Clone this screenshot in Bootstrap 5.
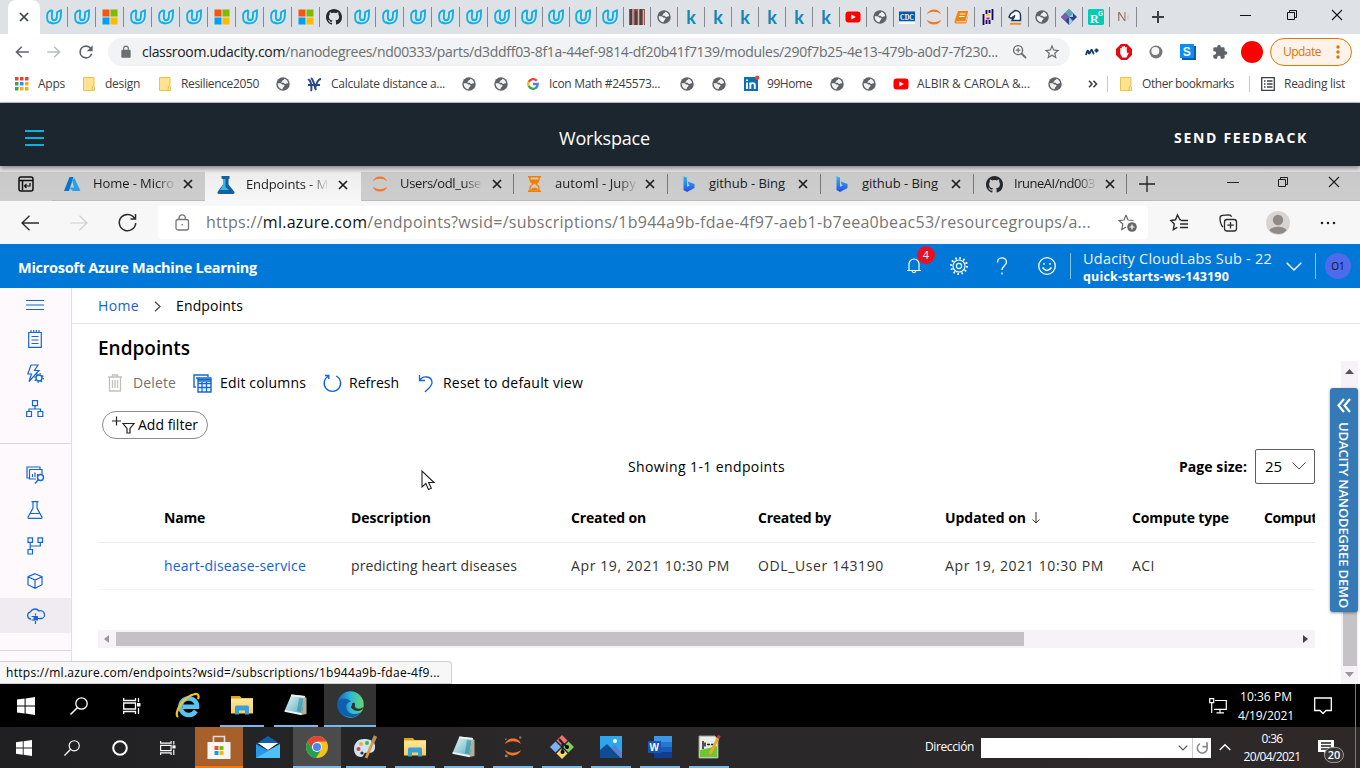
<!DOCTYPE html>
<html lang="en">
<head>
<meta charset="utf-8">
<title>Endpoints - Microsoft Azure Machine Learning</title>
<meta name="viewport" content="width=device-width, initial-scale=1">
<link rel="stylesheet" href="https://cdn.jsdelivr.net/npm/bootstrap@5.3.0/dist/css/bootstrap.min.css">
<style>
body{width:1360px;height:768px;overflow:hidden;font-family:"Open Sans","Noto Sans",sans-serif;font-size:12px;line-height:1.2;color:#000;background:#fff}
svg{display:block;flex:none;overflow:visible}
.bar{display:grid;align-items:center;white-space:nowrap}
.bar>*{justify-self:start}
.s10{width:10px;height:10px}.s12{width:12px;height:12px}.s14{width:14px;height:14px}.s16{width:16px;height:16px}.s18{width:18px;height:18px}.s20{width:20px;height:20px}.s24{width:24px;height:24px}
.ln{fill:none;stroke:currentColor}
/* outer browser */
.ctabs{height:34px;background:#dee1e6}
.ctab-on{width:32px;height:34px;margin-left:8px;background:#fff;border-radius:8px 8px 0 0}
.ctab{width:27px;height:20px;border-right:1px solid #85888c}
.ctab.wide{width:28px}
.kag{font:700 18px/18px Lato,sans-serif;color:#1287b5}
.nee{width:12px;overflow:hidden;color:#8a5d52;font-size:13px;-webkit-mask-image:linear-gradient(90deg,#000 60%,transparent)}
.cwin{grid-template-columns:90px 46px 45px 20px;color:#111;margin-left:13px}
.ctool{height:36px;grid-template-columns:32px 32px 31px 977px 31px 32px 32px 32px 29px 29px 82px;padding-left:13px;color:#5f6368}
.omni{width:962px;height:28px;border-radius:14px;background:#f1f3f4;grid-template-columns:24px 869px 32px 20px;padding-left:10px;font-size:14px;color:#6b6e72}
.omni b{font-weight:400;color:#202124}
.upd{width:82px;height:28px;border:1px solid #e37400;border-radius:14px;background:#fdf3ea;color:#d9730b;font-size:12px}
.cmark{height:33px;padding-bottom:4px;border-bottom:1px solid #c6c8cb;padding-left:15px;color:#3c4043;font-size:12px;
grid-template-columns:23px 45px 22px 54px 22px 95px 31px 24px 131px 32px 33px 22px 131px 32px 32px 23px 63px 32px 31px 24px 131px 40px 19px 13px 22px 107px 12px 23px 70px}
.cmark span{padding-top:1px}
.vsep{width:1px;height:16px;background:#c4c7cb}
/* classroom header */
.room{height:63px;background:#1c262f;color:#fff;grid-template-columns:534px 615px 140px;padding-left:25px;box-shadow:0 2px 5px rgba(0,0,0,.45);position:relative;z-index:2;padding-top:8px}
.room .ttl{font-size:18px}.room .fb{font-size:14px;font-weight:700}
/* inner browser */
.etabs{height:35px;background:linear-gradient(#e4e4e6 6px,#c9c9c9 6px,#cecece);font-size:13px;color:#1c1c1c;padding-top:6px}
.pgicon{width:52px;padding:4px 0 0 18px}
.etab{height:29px;grid-template-columns:29px 89px 12px;padding-left:12px;position:relative;padding-bottom:4px;border-bottom:1px solid #bcbcbc}
.e153{width:153px}.e154{width:154px}.e156{width:156px}
.etab.esep::after{content:"";position:absolute;right:0;top:2px;height:20px;width:1px;background:#777}
.etab.on{background:linear-gradient(#ececec,#f7f7f7);border-bottom:0}
.etab.wide90{grid-template-columns:29px 90px 12px}
.fade-r{-webkit-mask-image:linear-gradient(90deg,#000 76%,transparent 100%);width:83px;overflow:hidden}
.ewin{grid-template-columns:88px 50px 51px 14px;padding:0 0 5px 12px;border-bottom:1px solid #bcbcbc;flex:1}
.etool{height:43px;background:#f7f7f7;grid-template-columns:49px 48px 39px 1012px 49px 48px 53px 20px;padding-left:22px;color:#2b2b2b}
.ebox{width:990px;height:33px;background:#fff;border-radius:4px;grid-template-columns:31px 912px 20px;padding-left:17px;font-size:16px;color:#767676}
.ebox b{font-weight:400;color:#111}
.azh{height:44px;background:#0078d7;color:#fff;grid-template-columns:888px 44px 44px 44px 33px 13px 202px 30px 9px 26px;padding-left:18px}
.azh .ttl{font-weight:700;font-size:14.5px;padding-top:3px}
.dot4{width:18px;height:18px;background:#e81123;left:11px;top:-11px;font-size:11px}
.who{width:26px;height:26px;background:#4f6bed;color:#111;font-size:10px}
.subs{margin-left:-1px;padding-top:4px}
.sub1{font-size:14.5px;line-height:18px;color:#e9f3fc}.sub2{font-size:12.5px;font-weight:700;line-height:18px}
.azsep{width:1px;height:26px;background:#8cc0ed}
/* workspace */
.ws{height:396px;position:relative}
.side{width:72px;background:#fdf9fd;border-right:1px solid #e3dee4;color:#1565d8}
.side div{height:35px;display:flex;align-items:center;justify-content:center;padding-right:1px;width:71px}
.side .h34{height:34px}.side .h36{height:36px}
.side hr{margin:17px 0 13px;border-top:1px solid #ddd8de;opacity:1;height:0}
.side .sel{background:#efebf0}
.crumb{height:36px;border-bottom:1px solid #e5e3e5;font-size:14px;grid-template-columns:56px 22px 80px;padding:2px 0 0 26px}
.pg{padding-left:26px;font-size:14px}
.lk{color:#1062d6}
.h20{font-size:19px;font-weight:600;height:48px}
.cmds{height:22px;grid-template-columns:26px 60px 27px 103px 26px 69px 25px 149px;padding-left:9px}
.addf{width:106px;height:28px;border:1px solid #8c8c8c;border-radius:14px;margin:17px 0 0 4px;padding-left:9px;grid-template-columns:26px 70px}
.addf span{padding-top:1px}
.show{height:36px;margin-top:9px;grid-template-columns:530px 551px 76px 60px;width:1217px}
.show>span,.show>b{padding-top:3px}
.show b,.thd{font-weight:700}
.pgs{width:60px;height:35px;border:1px solid #605e5c;border-radius:2px;padding:0 8px 0 9px;font-size:15px}
.tr7{width:1217px;overflow:hidden;grid-template-columns:187px 220px 187px 187px 187px 132px 60px;padding-left:66px;color:#333}
.thd{height:59px;color:#000;border-bottom:1px solid #eceaec;padding-top:11px}
.thd .cut{width:51px;overflow:hidden}
.tbd{height:47px;border-bottom:1px solid #f6f5f6;padding-top:1px}
.hsc{width:1217px;height:18px;background:#f6f2f7;margin-top:40px;padding-left:5px;grid-template-columns:13px 1187px 10px;color:#9a979b}
.hth{width:908px;height:14px;background:#c3c1c4}
.vsc{right:2px;top:73px;width:17px;height:323px;background:#f6f2f7}
.vth{width:14px;height:208px;background:#c5c3c6;margin-top:84px}
.rib{right:2px;top:100px;width:28px;height:224px;background:#337ab7;border-radius:3px;color:#fff;box-shadow:0 1px 3px rgba(0,0,0,.4)}
.rib span{writing-mode:vertical-rl;font-size:13px;font-weight:600;line-height:16px}
.stat{left:0;bottom:0;width:452px;height:23px;background:#f7f7f7;border:1px solid #cfcfcf;border-left:0;border-radius:0 4px 0 0;padding:2px 6px;font-size:12px;line-height:17px}
.cur{left:421px;top:182px}
/* taskbars */
.tb1,.tb2{grid-template-rows:100%}
.tb1{height:43px;background:#000;color:#fff;grid-template-columns:53px 53px 44px 54px 54px 50px 884px 33px 72px 41px 1px;padding-left:17px}
.tb2{height:41px;background:linear-gradient(90deg,#202022,#2a2829 40%,#2e2829);color:#fff;grid-template-columns:48px 48px 48px 35px 49px 49px 53px repeat(8,49px) 243px 238px 24px 75px 37px 1px;padding-left:16px}
.cell{width:40px;height:100%;display:flex;align-items:center;justify-content:center;border-bottom:2px solid #76b9ed}
.w44{width:44px}.w48{width:48px}.w52{width:52px}
.tb2 .cell.nob{border-color:transparent}
.dir{justify-self:end!important;margin-right:7px}
.adr{width:230px;height:20px;background:#fff;color:#555;padding-right:2px}
.adr i{width:1px;height:20px;background:#ccc;margin:0 3px 0 4px}
.clk{line-height:19px;text-align:center;font-size:12px}
.tb2 .clk{line-height:18px;width:58px;padding-top:1px}
.edgeln{width:1px;height:100%;background:#777}
.nb20{left:6px;top:8px;width:20px;height:16px;border:1px solid #999;border-radius:8px;background:#3a3638;font-size:11px;font-weight:600}
</style>
</head>
<body class="d-flex flex-column">
<svg width="0" height="0" class="position-absolute" aria-hidden="true"><defs>
<linearGradient id="gEdge" x1="0" y1="0" x2="1" y2="0"><stop offset="0" stop-color="#0f63b8"/><stop offset=".5" stop-color="#2eb5d8"/><stop offset="1" stop-color="#63dc6b"/></linearGradient>
<linearGradient id="gNote" x1="0" y1="0" x2="1" y2="1"><stop offset="0" stop-color="#f0f8f8"/><stop offset="1" stop-color="#48a9bb"/></linearGradient>
<linearGradient id="gFold" x1="0" y1="0" x2="0" y2="1"><stop offset="0" stop-color="#ffe9a0"/><stop offset="1" stop-color="#f9cf52"/></linearGradient>
<linearGradient id="gBing" x1="0" y1="0" x2="0" y2="1"><stop offset="0" stop-color="#2fb6f3"/><stop offset="1" stop-color="#2150e6"/></linearGradient>
<symbol id="uda" viewBox="0 0 16 16"><path d="M6.300 1.300C3.500 1.800 1.300 3 1.200 6v3.500c0 3 2.300 5 5.300 4.800M6.300 1.300 5.800 8c0 2 .8 3.200 2.200 3.200s2.700-1.200 2.800-3L11.200 3l4-1.800-.5 7c-.3 3.500-3.200 6-6.700 6.200-2 0-3.400-.6-4.300-1.400" fill="none" stroke="#12b0e0" stroke-width="1.900" stroke-linejoin="round"/></symbol>
<symbol id="ms" viewBox="0 0 16 16"><path fill="#f65314" d="M.5.500h7v7h-7z"/><path fill="#7cbb00" d="M8.500.500h7v7h-7z"/><path fill="#00a1f1" d="M.5 8.500h7v7h-7z"/><path fill="#ffbb00" d="M8.500 8.500h7v7h-7z"/></symbol>
<symbol id="gh" viewBox="0 0 16 16"><path fill="#24292e" d="M8 0C3.580 0 0 3.580 0 8c0 3.540 2.290 6.530 5.470 7.590.400.070.550-.170.550-.380 0-.190-.010-.820-.010-1.490-2.010.370-2.530-.490-2.690-.940-.090-.230-.480-.940-.820-1.130-.280-.150-.680-.520-.010-.530.630-.010 1.080.580 1.230.820.720 1.210 1.870.870 2.330.660.070-.520.280-.870.510-1.070-1.780-.200-3.640-.890-3.640-3.950 0-.870.310-1.590.820-2.150-.080-.200-.360-1.020.080-2.120 0 0 .670-.210 2.200.820.640-.180 1.320-.270 2-.270s1.360.090 2 .270c1.530-1.040 2.200-.820 2.200-.820.440 1.100.160 1.920.080 2.120.510.560.820 1.270.820 2.150 0 3.070-1.870 3.750-3.650 3.950.290.250.540.730.540 1.480 0 1.070-.010 1.930-.010 2.200 0 .210.150.460.550.380A8.010 8.010 0 0 0 16 8c0-4.420-3.580-8-8-8z"/></symbol>
<symbol id="globe" viewBox="0 0 16 16"><circle cx="8" cy="8" r="7.700" fill="#5f6368"/><path fill="#f1f2f4" d="M1.900 7.200 5 7c1.600 0 1.300 1.500 3 1.700 1.600.1 2 .8 1.500 1.800-.6 1.100-1.700 1.100-2 3.600C4.400 13.900 1.900 11.300 1.900 7.200zM9.300 2.100c.4 1.100-.4 1.500-1.700 1.800-.8.300-.4 1.300-1.500 1.700-.3 1 1.300.9 2.400.9 1.200.1 1 1.500 2.300 1.600 1.300 0 1.400-1 3.200-.8-.2-2.500-2-4.600-4.700-5.200z"/></symbol>
<symbol id="books" viewBox="0 0 16 16"><path fill="#8a5550" d="M0 0h16v16H0z"/><path d="M2 0v16M7 2v14M12 0v16" stroke="#2f3550" stroke-width="1.400"/><path d="M4 0v16M9.500 0v16M14.500 1v15" stroke="#d3b497" stroke-width="1.200"/></symbol>
<symbol id="yt" viewBox="0 0 16 16"><rect x=".5" y="2.500" width="15" height="11" rx="3" fill="#f00"/><path fill="#fff" d="m6.300 5.500 4.500 2.500-4.500 2.500z"/></symbol>
<symbol id="cdc" viewBox="0 0 16 16"><path fill="#0b57a4" d="M0 2.500h16v10H0z"/><path fill="#fff" d="M0 12.500h16V15H0z"/><text x="8" y="10.800" text-anchor="middle" textLength="14" lengthAdjust="spacingAndGlyphs" font-family="Liberation Serif,serif" font-weight="700" font-size="8.500" fill="#fff">CDC</text></symbol>
<symbol id="jup" viewBox="0 0 16 16"><path fill="#f37726" d="M.8 5.300C3-1.200 13-1.200 15.200 5.300 11 2 5 2 .8 5.300zM.8 10.700C3 17.200 13 17.200 15.200 10.700c-4.200 3.300-10.200 3.300-14.400 0z"/></symbol>
<symbol id="obook" viewBox="0 0 16 16"><path fill="#f5820b" d="M5 2h9.500q.8.200.5 1L12.500 11.500q-.4.800-1 .8H3.500q-1 .5 0 1h9L15.500 5l-2 8.500q-.3 1-1 1H3q-1.800-.5-1.500-2z"/><path d="M6.800 5h5.500M6 7.500h5.500" stroke="#fff"/></symbol>
<symbol id="pandas" viewBox="0 0 16 16"><path d="M3.500 5v11M12.500 0v11M6.500 1v4m0 6v4M9.500 1v3m0 7v4" stroke="#150458" stroke-width="1.800"/><path d="M8 5v2" stroke="#ffca00" stroke-width="3"/><path d="M8 8.500v2" stroke="#e70488" stroke-width="3"/></symbol>
<symbol id="knight" viewBox="0 0 16 16"><path d="M5 11.500h8.500V6.500C13.500 3.500 11 1.500 8 1.500L3.500 5 2 8l2 1.300 3.500-2.300c0 2-2 2.500-2.500 4.500z" fill="#fff" stroke="#1c3d63" stroke-width="1.500"/><path d="M3 14.800h11" stroke="#f08a1d" stroke-width="1.800"/></symbol>
<symbol id="hexi" viewBox="0 0 16 16"><path fill="#33408b" d="M8 0l8 8-8 8-8-8z"/><path fill="#5ba7b5" d="M8 0l4 4-4 4-4-4z"/><path fill="#7b5ea8" d="M4 4l4 4-4 4-4-4z"/><path fill="#9bd0d6" d="M8 8l4-4v4zM8 8l4 4-4 4z"/></symbol>
<symbol id="rg" viewBox="0 0 16 16"><rect width="16" height="16" rx="1.500" fill="#00ccb1"/><text x="2" y="13.500" font-family="Liberation Serif,serif" font-weight="700" font-size="12" fill="#fff">R</text><text x="10" y="6.500" font-family="Liberation Sans,sans-serif" font-weight="700" font-size="6.500" fill="#fff">G</text></symbol>
<symbol id="back" viewBox="0 0 24 24"><path fill="currentColor" d="M21 11H7.100l5.300-5.300L11 4.200 3.100 12l7.900 7.800 1.400-1.500L7.100 13H21z"/></symbol>
<symbol id="reload" viewBox="0 0 24 24"><path fill="currentColor" d="M17.650 6.350A7.960 7.960 0 0 0 12 4a8 8 0 1 0 7.730 10h-2.080A6 6 0 1 1 12 6c1.660 0 3.140.690 4.220 1.780L13 11h7V4z"/></symbol>
<symbol id="lock" viewBox="0 0 24 24"><path fill="currentColor" fill-rule="evenodd" d="M18 8h-1V6A5 5 0 0 0 7 6v2H6a2 2 0 0 0-2 2v10c0 1.100.9 2 2 2h12a2 2 0 0 0 2-2V10a2 2 0 0 0-2-2zM9 6a3 3 0 0 1 6 0v2H9z"/></symbol>
<symbol id="star" viewBox="0 0 24 24"><path fill="currentColor" fill-rule="evenodd" d="M22 9.240l-7.190-.620L12 2 9.190 8.630 2 9.240l5.460 4.730L5.820 21 12 17.270 18.180 21l-1.630-7.030zM12 15.400l-3.760 2.270 1-4.280-3.320-2.880 4.380-.380L12 6.100l1.710 4.040 4.380.380-3.320 2.880 1 4.280z"/></symbol>
<symbol id="zoomin" viewBox="0 0 24 24"><circle cx="9.500" cy="9.500" r="6" fill="none" stroke="currentColor" stroke-width="1.900"/><path d="M14 14l6 6" stroke="currentColor" stroke-width="2.400"/><path d="M6.500 9.500h6M9.500 6.500v6" stroke="currentColor" stroke-width="1.600"/></symbol>
<symbol id="puz" viewBox="0 0 24 24"><path fill="currentColor" d="M20.500 11H19V7a2 2 0 0 0-2-2h-4V3.500a2.500 2.500 0 0 0-5 0V5H4a2 2 0 0 0-2 2v3.800h1.500a2.700 2.700 0 0 1 0 5.400H2V20c0 1.100.9 2 2 2h3.800v-1.500a2.700 2.700 0 0 1 5.400 0V22H17a2 2 0 0 0 2-2v-4h1.500a2.500 2.500 0 0 0 0-5z"/></symbol>
<symbol id="xx" viewBox="0 0 10 10"><path d="M1 1l8 8M9 1 1 9" stroke="currentColor" stroke-width="1.700"/></symbol>
<symbol id="xthin" viewBox="0 0 12 12"><path d="M1 1l10 10M11 1 1 11" stroke="currentColor" stroke-width="1.100"/></symbol>
<symbol id="rest" viewBox="0 0 12 12"><path d="M1.500 3.500h7v7h-7zM3.500 3.500v-2h7v7h-2" fill="none" stroke="currentColor"/></symbol>
<symbol id="fld" viewBox="0 0 12 14"><path d="M.5.500h10.500v8.500h-1.200v4.500H.5z" fill="#ffe391" stroke="#e8c34a"/><path d="M9.200 13.500V10q1.200-1.200 2.300 0v3.500z" fill="#ffe391" stroke="#e8c34a"/></symbol>
<symbol id="win" viewBox="0 0 18 18"><path fill="#fff" d="M0 2.600 7.600 1.500v7H0zM8.600 1.400 18 0v8.500H8.600zM0 9.500h7.600v7L0 15.400zM8.600 9.500H18V18l-9.400-1.400z"/></symbol>
<symbol id="find" viewBox="0 0 18 18"><circle cx="11.500" cy="6.500" r="5.700" fill="none" stroke="#fff" stroke-width="1.300"/><path d="M7.500 10.500.5 17.500" stroke="#fff" stroke-width="1.500"/></symbol>
<symbol id="tv" viewBox="0 0 18 18"><path d="M.7 1v2.500h11.800V1M.7 17v-2.500h11.800V17M.7 6h11.800v6H.7zM15.500 1v4M15.500 11v6" fill="none" stroke="#fff" stroke-width="1.300"/><path fill="#fff" d="M14 6h3.500v3.500H14z"/></symbol>
<symbol id="fold2" viewBox="0 0 24 24"><path fill="#e0a312" d="M1 3h9l1.500 2H23v3H1z"/><path fill="url(#gFold)" d="M1 5.500h22v15H1z"/><path fill="#3aa0dc" d="M5 21.500v-7.500q0-1.500 1.500-1.500h11q1.500 0 1.500 1.500v7.500h-4v-4H9v4z"/></symbol>
<symbol id="note" viewBox="0 0 24 24"><path fill="#b9ac95" d="M20 3.500 22.500 5v16l-5 1z"/><path fill="url(#gNote)" d="M7.500 1.500 21 3l-3.500 18.500L.5 18z"/><path fill="#eef3f2" d="M7.500 1.500 21 3l-.3 1.800L6.800 3.200zM1 17l17 3.200-.4 2L.3 18.800z"/><path fill="#2d8699" opacity=".55" d="M15 5l4.500.6L16.800 19l-4-.8z"/></symbol>
<symbol id="bing" viewBox="0 0 12 16"><path fill="url(#gBing)" d="M.5.300 4 1.600v9.200l3-1.600-1.400-.8L4.700 5.500 11.500 8v4L4 16 .5 14z"/></symbol>
</defs></svg>

<!-- outer browser: tab strip -->
<div class="ctabs d-flex align-items-center">
 <div class="ctab-on d-flex align-items-center justify-content-center"><svg class="s10" style="color:#3c4043"><use href="#xx"/></svg></div>
 <div id="tabs" class="d-flex"></div>
 <div class="cwin bar">
  <svg class="s16" viewBox="0 0 16 16"><path d="M2 8h12M8 2v12" stroke="#3c4043" stroke-width="2"/></svg>
  <svg width="12" height="12"><path d="M0 4.500h11" stroke="#111"/></svg>
  <svg class="s12" style="margin-top:-5px"><use href="#rest"/></svg>
  <svg class="s12" style="margin-top:-5px"><use href="#xthin"/></svg>
 </div>
</div>
<!-- outer browser: toolbar -->
<div class="ctool bar">
 <svg class="s18"><use href="#back"/></svg>
 <svg class="s18" style="color:#babcbe;transform:scaleX(-1)"><use href="#back"/></svg>
 <svg class="s20" style="margin-left:-1px"><use href="#reload"/></svg>
 <div class="omni bar"><svg class="s14" style="margin-left:1px"><use href="#lock"/></svg><span data-w="856"><b>classroom.udacity.com</b>/nanodegrees/nd00333/parts/d3ddff03-8f1a-44ef-9814-df20b41f7139/modules/290f7b25-4e13-479b-a0d7-7f230...</span><svg class="s18"><use href="#zoomin"/></svg><svg class="s18"><use href="#star"/></svg></div>
 <svg width="14" height="10" viewBox="0 0 14 10"><path d="M1 8c1-4 2-6 2.500-3S5 6 6 3.500 7.500 6 9 7M9.500 3.500h4M11.500 1.500v4" fill="none" stroke="#123a69" stroke-width="1.800"/></svg>
 <svg class="s16" viewBox="0 0 16 16"><path fill="#e20b14" d="M5 0h6l5 5v6l-5 5H5l-5-5V5z"/><path fill="#fff" d="M4.300 7V4h1.200v3l.4-4.500h1.400V7l.3-5h1.400v5l.4-4h1.300l.2 6.500 1-1 .8.600L10.500 13.500H6.300L4.300 10z"/></svg>
 <svg class="s16" viewBox="0 0 16 16"><circle cx="8" cy="8" r="6.500" fill="#777"/><circle cx="7.300" cy="7" r="4" fill="#f6f6f6"/></svg>
 <svg class="s16" viewBox="0 0 16 16"><path fill="#0b5ca8" d="M2 2h14v14H2z"/><path fill="#0a8df5" d="M0 0h14v14H0z"/><text x="2.700" y="11.500" font-size="12" font-weight="700" font-family="Liberation Sans,sans-serif" fill="#fff">S</text></svg>
 <svg class="s16"><use href="#puz"/></svg>
 <svg width="22" height="22"><circle cx="11" cy="11" r="11" fill="#f00"/></svg>
 <div class="upd d-flex align-items-center justify-content-between ps-2"><span class="ms-1" data-w="38">Update</span><svg width="4" height="14" style="margin-right:11px"><path d="M2 2v.01M2 7v.01M2 12v.01" stroke="#d9730b" stroke-width="3.400" stroke-linecap="round"/></svg></div>
</div>
<!-- outer browser: bookmarks -->
<div class="cmark bar">
 <svg width="14" height="14"><path fill="#ea4335" d="M0 0h3.500v3.500H0zM5 0h3.500v3.500H5zM10 0h3.500v3.500H10z"/><path fill="#34a853" d="M0 5h3.500v3.500H0zM0 10h3.500v3.500H0z"/><path fill="#4285f4" d="M5 5h3.500v3.500H5z"/><path fill="#f6ae16" d="M10 5h3.500v3.500H10zM5 10h3.500v3.500H5zM10 10h3.500v3.500H10z"/></svg><span data-w="27">Apps</span>
 <svg width="12" height="14"><use href="#fld"/></svg><span data-w="35">design</span>
 <svg width="12" height="14"><use href="#fld"/></svg><span data-w="78">Resilience2050</span>
 <svg class="s14"><use href="#globe"/></svg>
 <svg width="15" height="15" viewBox="0 0 15 15"><path d="M1 3c3-2 4 9 3 11M4 1c3 2 3 8 5 12M8 12C9 8 10 2 14 2M1 8h12" fill="none" stroke="#234a86" stroke-width="2"/></svg><span data-w="114">Calculate distance a...</span>
 <svg class="s14"><use href="#globe"/></svg><svg class="s14"><use href="#globe"/></svg>
 <svg width="12" height="12" viewBox="0 0 24 24" fill="none" stroke-width="4.600"><path stroke="#ea4335" d="M19.500 5.500A9.600 9.600 0 0 0 3.500 8"/><path stroke="#fbbc05" d="M3.500 7.500a9.600 9.600 0 0 0 0 9"/><path stroke="#34a853" d="M3.500 16A9.600 9.600 0 0 0 18.500 19.200"/><path stroke="#4285f4" d="M18 19.500c2.500-2 3.500-4.500 3.500-7.500H12"/></svg><span data-w="111">Icon Math #245573...</span>
 <svg class="s14"><use href="#globe"/></svg><svg class="s14"><use href="#globe"/></svg>
 <svg class="s14" viewBox="0 0 14 14"><path fill="#0a71b0" d="M0 0h14v14H0z"/><path d="M3 5.500V12M6.300 5.500V12M6.300 8c1-2.500 4.500-2.500 4.500 0v4M3 2.500v1.600" stroke="#fff" stroke-width="1.900" fill="none"/><circle cx="13.200" cy=".8" r="2.200" fill="#ee4035"/></svg><span data-w="45">99Home</span>
 <svg class="s14"><use href="#globe"/></svg><svg class="s14"><use href="#globe"/></svg>
 <svg class="s16"><use href="#yt"/></svg><span data-w="113">ALBIR &amp; CAROLA &amp;...</span>
 <svg class="s14"><use href="#globe"/></svg>
 <svg width="10" height="8"><path d="M1 .8 4 4 1 7.200M5.500.8l3 3.200-3 3.200" class="ln" stroke-width="1.600"/></svg>
 <i class="vsep"></i>
 <svg width="12" height="14"><use href="#fld"/></svg><span data-w="92">Other bookmarks</span>
 <i class="vsep"></i>
 <svg width="14" height="14" class="ln"><path d="M.7.7h12.600v12.600H.7zM3 4h1.500M3 7h1.500M3 10h1.500M6 4h5.500M6 7h5.500M6 10h5.500" stroke-width="1.300"/></svg><span data-w="61">Reading list</span>
</div>

<!-- classroom header -->
<div class="room bar">
 <svg width="20" height="16" style="margin-top:-1px"><path d="M0 1h19M0 8h19M0 15h19" stroke="#02b3e4" stroke-width="2"/></svg>
 <span class="ttl" data-w="91">Workspace</span>
 <span class="fb" data-w="134">SEND FEEDBACK</span>
</div>

<!-- inner browser: tabs -->
<div class="etabs d-flex">
 <div class="pgicon"><svg width="16" height="16" viewBox="0 0 16 16"><path d="M1 4.500V13q0 2 2 2h10q2 0 2-2V3q0-2-2-2H3Q1 1 1 3v1.500h14M4.500 5v9" fill="none" stroke="#111" stroke-width="1.500"/><path d="M8.500 12 6.500 10l2-2M7 10h5V7" fill="none" stroke="#111" stroke-width="1.200"/></svg></div>
 <div class="etab wide90 e153 bar"><svg width="17" height="15" viewBox="0 0 17 15"><path fill="#0a74c9" d="M5.500 0h4L5 14H0z"/><path fill="#2aa0ea" d="M8 3l2.500-2L16.500 14H9l-4-3.500h5z"/></svg><span class="fade-r"><span data-w="81">Home - Micro</span></span><svg class="s10"><use href="#xx"/></svg></div>
 <div class="etab on e156 bar"><svg width="18" height="18" viewBox="0 0 18 18"><path fill="#12609f" d="M4.500 0h8v2.500l-1 .8v5.200l6 7.500q.3 2-1.500 2h-14q-2 0-1.500-2L6 8.500V3.300l-1.500-.8z"/><path fill="#35b6e8" d="M6 3h2.500v8l3.500 3h-9L6 9z"/></svg><span class="fade-r"><span data-w="82">Endpoints - M</span></span><svg class="s10" style="margin-left:3px"><use href="#xx"/></svg></div>
 <div class="etab wide90 e153 bar esep"><svg class="s16" style="margin-left:-1px"><use href="#jup"/></svg><span class="fade-r" style="margin-left:-2px"><span data-w="81">Users/odl_use</span></span><svg class="s10"><use href="#xx"/></svg></div>
 <div class="etab wide90 e154 bar esep"><svg width="15" height="16" viewBox="0 0 15 16" style="margin-left:1px"><path d="M1 .8h13M1 15.200h13" stroke="#f57c00" stroke-width="1.600"/><path d="M3 1v3q0 2 3 4-3 2-3 4v3M12 1v3q0 2-3 4 3 2 3 4v3" fill="none" stroke="#f57c00" stroke-width="1.300"/><path fill="#f57c00" d="M3 3.500h9Q11 7 7.500 8 4 7 3 3.500zM3 14.500q4.500-6 9 0z"/></svg><span class="fade-r"><span data-w="81">automl - Jupy</span></span><svg class="s10"><use href="#xx"/></svg></div>
 <div class="etab e153 bar esep"><svg width="12" height="16" style="margin-left:3px"><use href="#bing"/></svg><span data-w="76">github - Bing</span><svg class="s10"><use href="#xx"/></svg></div>
 <div class="etab e153 bar esep"><svg width="12" height="16" style="margin-left:3px"><use href="#bing"/></svg><span data-w="76">github - Bing</span><svg class="s10"><use href="#xx"/></svg></div>
 <div class="etab wide90 e153 bar esep"><svg width="17" height="17"><use href="#gh"/></svg><span class="fade-r" style="margin-left:-1px"><span data-w="81">IruneAI/nd003</span></span><svg class="s10"><use href="#xx"/></svg></div>
 <div class="ewin bar"><svg width="16" height="16"><path d="M0 8h16M8 0v16" stroke="#222" stroke-width="1.300"/></svg><svg width="12" height="4"><path d="M0 .5h12" stroke="#222"/></svg><svg class="s12" style="margin-top:-3px"><use href="#rest"/></svg><svg class="s12" style="margin-top:-3px"><use href="#xthin"/></svg></div>
</div>
<!-- inner browser: toolbar -->
<div class="etool bar">
 <svg width="18" height="16" class="ln" style="margin-left:-1px"><path d="M18 8H1M8.500.7 1 8l7.500 7.300" stroke-width="1.300"/></svg>
 <svg width="18" height="16" class="ln" style="color:#cfcfcf;margin-left:-1px"><path d="M0 8h17M9.500.7 17 8l-7.500 7.300" stroke-width="1.200"/></svg>
 <svg width="19" height="19" viewBox="0 0 19 19" class="ln" style="margin-left:-1px"><path d="M16.500 5.300A8.200 8.200 0 1 0 17.700 10M17.500 1v5h-5" stroke-width="1.500"/></svg>
 <div class="ebox bar"><svg width="15" height="17" class="ln"><rect x="1" y="5.500" width="12.500" height="10.500" rx="2" stroke-width="1.300"/><path d="M4 5.500V4a3.200 3.200 0 0 1 6.400 0v1.500M7.200 10v1.500" stroke-width="1.300"/></svg><span data-w="885">https://<b>ml.azure.com</b>/endpoints?wsid=/subscriptions/1b944a9b-fdae-4f97-aeb1-b7eea0beac53/resourcegroups/a...</span><svg width="19" height="18" viewBox="0 0 19 18"><path d="M8 1l2 5 5.500.5M8 1 6 6 1 6.500 4.800 10l-1 5.500L8 13" fill="none" stroke="#666" stroke-width="1.200"/><circle cx="14" cy="13" r="4.800" fill="#666"/><path d="M11.500 13h5M14 10.500v5" stroke="#fff" stroke-width="1.200"/></svg></div>
 <svg width="18" height="17" viewBox="0 0 18 17" class="ln"><path d="M11 5.800h-1L7.500 1 5.500 5.800.8 6.500l3.500 3.600-1 5.500 4-2.200M11 6.500h7M10 10h8M10 13.500h8" stroke-width="1.400"/></svg>
 <svg width="19" height="18" viewBox="0 0 19 18" class="ln"><rect x="5.500" y="5.500" width="12" height="11.500" rx="2.500" stroke-width="1.300"/><path d="M11.500 8v6.500M8.300 11.200h6.500M4 13C2 11 1 7 1 4c0-1.500 1-2.500 2.500-2.700L10 .8q2 0 2.500 2" stroke-width="1.300"/></svg>
 <svg width="24" height="24" style="margin-left:-1px"><circle cx="12" cy="12" r="12" fill="#d8d4d1"/><circle cx="12" cy="9" r="5.200" fill="#8e8a87"/><path fill="#8e8a87" d="M3.500 19.500C5 14.500 19 14.500 20.500 19.500a12 12 0 0 1-17 0z"/></svg>
 <svg width="16" height="4"><path d="M2 2h.01M8 2h.01M14 2h.01" stroke="#222" stroke-width="2.600" stroke-linecap="round"/></svg>
</div>
<!-- Azure header -->
<div class="azh bar">
 <span class="ttl" data-w="239">Microsoft Azure Machine Learning</span>
 <div class="position-relative"><svg width="16" height="18" viewBox="0 0 16 18" class="ln"><path d="M1 13.500h14M3 13V7a5 5 0 0 1 10 0v6M6 14q2 3.500 4 0" stroke-width="1.200"/></svg><span class="dot4 rounded-circle position-absolute d-flex align-items-center justify-content-center">4</span></div>
 <svg width="18" height="18" viewBox="0 0 18 18" class="ln"><circle cx="9" cy="9" r="2.600" stroke-width="1.100"/><circle cx="9" cy="9" r="6" stroke-width="1.100"/><circle cx="9" cy="9" r="7.900" stroke-width="2.200" stroke-dasharray="1.600 2.540"/></svg>
 <svg width="12" height="18" viewBox="0 0 12 18" class="ln" style="margin-left:2px"><path d="M1.500 5.500C1.500-.5 10.500-.5 10.500 5c0 3.500-4.500 4-4.500 8M6 15.500v2" stroke-width="1.300"/></svg>
 <svg width="18" height="18" class="ln"><circle cx="9" cy="9" r="8.300" stroke-width="1.300"/><path d="M4.500 10.500q4.500 6 9 0M6 6v1.800M12 6v1.800" stroke-width="1.500"/></svg>
 <i class="azsep" style="margin-left:-1px"></i>
 <div class="subs"><div class="sub1"><span data-w="189">Udacity CloudLabs Sub - 22</span></div><div class="sub2"><span data-w="146">quick-starts-ws-143190</span></div></div>
 <svg width="16" height="9" class="ln"><path d="M.7.7 8 8l7.300-7.300" stroke-width="1.400"/></svg>
 <i class="azsep" style="margin-left:-1px"></i>
 <span class="who rounded-circle d-flex align-items-center justify-content-center">O1</span>
</div>

<!-- workspace -->
<div class="ws d-flex">
 <nav class="side d-flex flex-column flex-shrink-0">
  <div class="h34"><svg width="18" height="12" class="ln"><path d="M0 1.500h18M0 6h18M0 10.500h18" stroke-width="1.200"/></svg></div>
  <div class="h34"><svg width="14" height="18" class="ln"><path d="M.7 2.500h12.600v14.800H.7zM3 0v3M5.700 0v3M8.300 0v3M11 0v3M3.500 6.500h7M3.500 10h7M3.500 13.500h7" stroke-width="1.200"/></svg></div>
  <div><svg width="18" height="19" viewBox="0 0 18 19" class="ln"><path d="M5 1h7L8.500 6.500h4.500L3 17.500 5.500 10H1.800z" stroke-width="1.200"/><circle cx="13" cy="14" r="3" fill="#fdf9fd" stroke-width="1.400"/><circle cx="13" cy="14" r="4.200" stroke-dasharray="1.300 2" stroke-width="1.500"/></svg></div>
  <div><svg width="18" height="18" class="ln"><path d="M6.500.7h5v5h-5zM.7 11.500h4.800v5H.7zM12 11.500h4.800v5H12zM9 6v3M3 11.500V9h11.500v2.500" stroke-width="1.200"/></svg></div>
  <hr>
  <div><svg width="19" height="18" viewBox="0 0 19 18" class="ln"><path d="M3 12H1V1h13v2M3.500 3.500h12.500v5M3.500 3.500v9.500H10M6.500 8v3M9 6.500V11M11.500 8v2" stroke-width="1.200"/><circle cx="14.500" cy="11.500" r="3" stroke-width="1.400"/><path d="M12.500 13.500 9 17.500" stroke-width="1.300"/></svg></div>
  <div class="h36"><svg width="16" height="18" class="ln"><path d="M4.500.7h7M6 1v6L1 16.300q-.2 1 .8 1h12.400q1 0 .8-1L10 7V1M3.500 12.500h9" stroke-width="1.200"/></svg></div>
  <div><svg width="17" height="18" class="ln"><path d="M1 .8h4.500v4.500H1zM11 .8h4.500v4.500H11zM1 12.500h4.500V17H1zM3.200 5.500v7M3.200 9H13.300V5.500" stroke-width="1.200"/></svg></div>
  <div><svg width="16" height="16" class="ln"><path d="M8 .7l7 3v8l-7 3.600-7-3.600v-8zM1 3.700l7 3.300 7-3.300M8 7v8" stroke-width="1.200"/></svg></div>
  <div class="sel"><svg width="19" height="16" viewBox="0 0 19 16" class="ln"><path d="M5 11H4.500a3.700 3.700 0 0 1 0-7.200A5 5 0 0 1 13 3a3.900 3.900 0 0 1 3 7.500h-3" stroke-width="1.300"/><path d="M5.500 8.500H8M5.500 12H8M9.500 5.500v2M9.500 13v3M12 10.500h2" stroke-width="1.200"/><rect x="8" y="8.500" width="3.500" height="3.500" fill="currentColor"/></svg></div>
  <hr>
 </nav>
 <main class="flex-grow-1 overflow-hidden">
  <div class="crumb bar"><span class="lk" data-w="41">Home</span><svg width="8" height="11"><path d="M1 .7 6 5.500 1 10.300" fill="none" stroke="#444" stroke-width="1.200"/></svg><span data-w="67">Endpoints</span></div>
  <div class="pg">
   <div class="h20 d-flex align-items-center"><span data-w="92">Endpoints</span></div>
   <div class="cmds bar">
    <svg width="16" height="18" viewBox="0 0 16 18"><path d="M1 3h14M5.500 3V1h5v2M2.500 3v14h11V3M5.500 6v8M8 6v8M10.500 6v8" fill="none" stroke="#c3c1c0" stroke-width="1.300"/></svg><span data-w="43" style="color:#75726f">Delete</span>
    <svg width="19" height="19" viewBox="0 0 19 19"><path d="M3 13H1V1h14v2M3 4h15v14H5V4M5 7h13" fill="none" stroke="#1565d8" stroke-width="1.400"/><path d="M5 5.500h13M5 9.500h13M5 13.500h13M9 8v10M13.500 8v10" stroke="#1565d8" stroke-width="1.300"/></svg><span data-w="86">Edit columns</span>
    <svg width="19" height="19" viewBox="0 0 19 19"><path d="M5.500 2A8.200 8.200 0 1 0 13.300 2M5.800 5V1.500H2" fill="none" stroke="#1565d8" stroke-width="1.400"/></svg><span data-w="50">Refresh</span>
    <svg width="16" height="19" viewBox="0 0 16 19"><path d="M1.500 1v5.500H7M2 6.500C4 1.500 14 1.500 14 8.500c0 4-4 6-7 9.500" fill="none" stroke="#1565d8" stroke-width="1.300"/></svg><span data-w="140">Reset to default view</span>
   </div>
   <div class="addf bar"><svg width="23" height="18" viewBox="0 0 23 18"><path d="M0 5h9M4.500.5v9M11 7.500h11l-4 5V17h-3v-4.500z" fill="none" stroke="#222" stroke-width="1.200"/></svg><span data-w="60">Add filter</span></div>
   <div class="show bar"><i></i><span data-w="157">Showing 1-1 endpoints</span><b data-w="68">Page size:</b><div class="pgs d-flex align-items-center justify-content-between"><span data-w="17">25</span><svg width="14" height="8"><path d="M.5.500 7 7 13.500.500" fill="none" stroke="#555"/></svg></div></div>
   <div class="tr7 thd bar"><span data-w="41">Name</span><span data-w="80">Description</span><span data-w="75">Created on</span><span data-w="73">Created by</span><span class="d-flex align-items-center"><span data-w="81">Updated on</span><svg width="9" height="12" style="margin-left:5px"><path d="M5 0v11M1.500 7.500 5 11l3.500-3.500" fill="none" stroke="#333"/></svg></span><span data-w="97">Compute type</span><span class="cut"><span data-w="53">Comput</span></span></div>
   <div class="tr7 tbd bar"><span class="lk" data-w="142">heart-disease-service</span><span data-w="166">predicting heart diseases</span><span data-w="159">Apr 19, 2021 10:30 PM</span><span data-w="126">ODL_User 143190</span><span data-w="159">Apr 19, 2021 10:30 PM</span><span data-w="23">ACI</span></div>
   <div class="hsc bar"><svg width="6" height="8"><path d="M6 0v8L1 4z" fill="currentColor"/></svg><div class="hth"></div><svg width="6" height="8"><path d="M0 0v8l5-4z" fill="#444"/></svg></div>
  </div>
 </main>
 <div class="vsc position-absolute d-flex flex-column align-items-center"><svg width="9" height="5" style="margin-top:8px"><path d="M0 5h9L4.500 0z" fill="#555"/></svg><div class="vth"></div><svg width="9" height="5" style="margin-top:6px"><path d="M0 0h9L4.500 5z" fill="#9a979b"/></svg></div>
 <div class="rib position-absolute d-flex flex-column align-items-center"><svg width="14" height="15" style="margin:10px 0 9px"><path d="M7 1 1.500 7.500 7 14M13 1 7.500 7.500 13 14" fill="none" stroke="#fff" stroke-width="2.200"/></svg><span data-h="186">UDACITY NANODEGREE DEMO</span></div>
 <svg class="cur position-absolute" width="14" height="21" viewBox="0 0 14 21"><path d="M1 1v16l3.800-3.500 2.700 6 2.800-1.200-2.700-5.800H13z" fill="#fff" stroke="#222" stroke-width="1.100"/></svg>
 <div class="stat position-absolute text-nowrap"><span data-w="434">https://ml.azure.com/endpoints?wsid=/subscriptions/1b944a9b-fdae-4f9...</span></div>
</div>

<!-- remote desktop taskbar -->
<div class="tb1 bar">
 <svg class="s18"><use href="#win"/></svg><svg class="s18"><use href="#find"/></svg><svg class="s18"><use href="#tv"/></svg>
 <div style="padding-left:8px"><svg width="25" height="25" viewBox="0 0 25 25"><path d="M20.800 18A8.300 8.300 0 1 1 22 13.800H8" fill="none" stroke="#5ac4f1" stroke-width="4.600"/><path d="M3 24C-2 20 9 3 20 1q5-.5 3 5" fill="none" stroke="#f5c21f" stroke-width="2.200"/></svg></div>
 <div class="cell w44" style="margin-left:-1px"><svg class="s24"><use href="#fold2"/></svg></div>
 <div class="cell w44" style="margin-left:-1px"><svg class="s24"><use href="#note"/></svg></div>
 <div class="cell w52" style="background:#333;margin-left:-1px"><svg width="27" height="27" viewBox="0 0 27 27"><circle cx="13.500" cy="13.500" r="13.200" fill="url(#gEdge)"/><path fill="#0f5fae" d="M.3 14C1 6 11 6 14 11c-6-1-7 10 2 12 4 .5 7-1 8.500-2.500C19 30 1 27 .3 14z"/><path fill="#333" d="M14.500 17c-1.500-1.500 1-2 .5-4.500 0 0 3-2 3 1 0 2-.5 2.500 1 3.500 3 1.500 6.500 0 7.500-1-1 5-9 5-12 1z"/></svg></div>
 <svg width="18" height="16" viewBox="0 0 18 16" class="ln"><path d="M6 2.500h11.300v8.800H5M11 11.500v3M7.500 14.800h7.500M.7.700h4v4h-4zM2.700 5v10" stroke-width="1.200"/></svg>
 <div class="clk" style="margin-left:-4px;width:56px"><div><span data-w="52">10:36 PM</span></div><div><span data-w="56">4/19/2021</span></div></div>
 <svg width="18" height="18" class="ln"><path d="M.7 1h16.600v12.500H12L9 16.500l-3-3H.7z" stroke-width="1.300"/></svg>
 <i class="edgeln"></i>
</div>
<!-- desktop taskbar -->
<div class="tb2 bar">
 <svg class="s16"><use href="#win"/></svg><svg class="s16"><use href="#find"/></svg>
 <svg class="s16"><circle cx="8" cy="8" r="6.800" fill="none" stroke="#fff" stroke-width="2"/></svg><svg class="s16"><use href="#tv"/></svg>
 <div class="cell w48" style="background:#a8602a;border-color:#ff7500"><svg width="24" height="24" viewBox="0 0 24 24"><path d="M6.500 8V1.500h11V8" fill="none" stroke="#ddd" stroke-width="1.600"/><path fill="#f6f6f6" d="M.5 7h23v17H.5z"/><path fill="#f25022" d="M7.500 11h4v4h-4z"/><path fill="#7fba00" d="M12.500 11h4v4h-4z"/><path fill="#00a4ef" d="M7.500 16h4v4h-4z"/><path fill="#ffb900" d="M12.500 16h4v4h-4z"/></svg></div>
 <div class="cell nob w48"><svg width="24" height="22" viewBox="0 0 24 22"><path fill="#1160ad" d="M0 8 12 0l12 8z"/><path fill="#fff" d="M2 7h20L12 14z"/><path fill="#2599e8" d="M0 8v14h24V8L12 14.500z"/><path fill="#4fc0f8" d="M24 8 0 22h24z"/></svg></div>
 <div class="cell w48" style="background:#4c4b4c"><svg width="22" height="22" viewBox="0 0 22 22"><circle cx="11" cy="11" r="11" fill="#fbc116"/><path fill="#de4437" d="M1.500 5.500a11 11 0 0 1 19 0H11L6.500 13z"/><path fill="#23a050" d="M1.500 5.500A11 11 0 0 0 10 22l5-8-8.500-1z"/><circle cx="11" cy="11" r="5" fill="#fff"/><circle cx="11" cy="11" r="4" fill="#4a85f3"/></svg></div>
 <div class="cell"><svg class="s24" viewBox="0 0 24 24"><path fill="#cfe3f3" d="M10 4C3 4 0 9 0 14s3 8 7 8c3 0 2-3 4-4s9 2 10-5S16 4 10 4z"/><circle cx="4.500" cy="14" r="2" fill="#d6453d"/><circle cx="7" cy="9" r="2" fill="#e5b23a"/><circle cx="13" cy="8" r="2" fill="#4caf50"/><circle cx="8" cy="18" r="1.600" fill="#333"/><path d="M12 23 18.500 8" stroke="#e0963a" stroke-width="2.800"/><path d="M18.500 8l3-7" stroke="#b98a5c" stroke-width="3.600"/></svg></div>
 <div class="cell"><svg class="s24"><use href="#fold2"/></svg></div>
 <div class="cell"><svg class="s24"><use href="#note"/></svg></div>
 <div class="cell"><svg class="s20" viewBox="-1 -1 18 18"><use href="#jup" width="16" height="16"/><circle cx="14.500" cy="-.5" r="1.100" fill="#777"/><circle cx="1.500" cy="1" r=".8" fill="#777"/><circle cx="2" cy="16" r="1.300" fill="#888"/></svg></div>
 <div class="cell"><svg class="s24" viewBox="0 0 24 24"><path fill="#f07070" d="M12 0l5.500 5.500L12 11 6.500 5.500z"/><path fill="#7ab0f5" d="M5.500 6.500 11 12l-5.500 5.500L0 12z"/><path fill="#86ca62" d="M18.500 6.500 24 12l-5.500 5.500L13 12z"/><path fill="#f6d968" d="M12 13l5.500 5.500L12 24l-5.500-5.500z"/><path d="M9 4l3.500 4v9M12.500 8l5 4" stroke="#222" stroke-width="2" fill="none"/><circle cx="12.500" cy="17" r="2"/><circle cx="17" cy="12" r="2"/></svg></div>
 <div class="cell"><svg width="22" height="22" viewBox="0 0 22 22"><path fill="#2ca7ee" d="M0 0h22v22H0z"/><path fill="#0f4c92" d="M0 14l7-6 14 14H0z"/><path fill="#5c7fd4" d="M11 12l4-3 7 8v5h-1z"/><circle cx="15" cy="5" r="2" fill="#fff"/></svg></div>
 <div class="cell"><svg class="s24" viewBox="0 0 24 22"><path fill="#3a97e6" d="M6 0h18v6H6z"/><path fill="#2277cf" d="M6 6h18v5H6z"/><path fill="#185abd" d="M6 11h18v5H6z"/><path fill="#103f91" d="M6 16h18v6H6z"/><path fill="#1a52b5" d="M0 5h13v12H0z"/><text x="1.500" y="14.500" font-size="10" font-weight="700" fill="#fff" font-family="Liberation Sans,sans-serif">W</text></svg></div>
 <div class="cell"><svg class="s24" viewBox="0 0 24 24"><path fill="#e9efe6" stroke="#999" d="M2 1h16l3 4v18H2z"/><path fill="#6fc52f" d="M3 15l17-4v11H3z"/><path d="M6 6v8M8 7.500v4M10 9.500h3M14 9.500h3" stroke="#222" stroke-width="1.500"/><path d="M13 19 21 3" stroke="#e8a92c" stroke-width="3"/><path d="M21 3l1.500-2.500" stroke="#c03a2b" stroke-width="3"/></svg></div>
 <span class="dir" data-w="49">Dirección</span>
 <div class="adr d-flex align-items-center justify-content-end"><svg width="10" height="6" class="ln"><path d="M.7.700 5 5 9.300.700" stroke-width="1.200"/></svg><i></i><svg width="13" height="14" viewBox="2 2 20 20" style="color:#888"><path d="M8 5.500A7.500 7.500 0 1 0 18.500 9M19 3v7h-7" fill="none" stroke="currentColor" stroke-width="2.600"/></svg></div>
 <svg width="12" height="7" class="ln"><path d="M.7 6 6 .8 11.300 6" stroke-width="1.500"/></svg>
 <div class="clk"><div><span data-w="21">0:36</span></div><div><span data-w="57">20/04/2021</span></div></div>
 <div class="position-relative"><svg width="18" height="18"><path fill="#fff" d="M0 1h16v12H9l-3 3v-3H0z"/><path d="M3 4h10M3 7h10M3 10h7" stroke="#222" stroke-width="1.300"/></svg><span class="nb20 position-absolute d-flex align-items-center justify-content-center">20</span></div>
 <i class="edgeln"></i>
</div>

<script>
/* pinned tabs of the outer browser, in strip order */
const icons = ('uda uda ms uda uda uda ms uda uda ms gh uda uda uda uda uda uda uda uda uda uda books globe ' +
  'k k k k k k yt globe cdc jup obook pandas knight globe hexi rg ne').split(' ');
document.getElementById('tabs').innerHTML = icons.map((n, i) => {
  const body = n === 'k' ? '<span class="kag">k</span>' : n === 'ne' ? '<span class="nee">Ne</span>' :
    `<svg class="${n === 'globe' ? 's14' : 's16'}"><use href="#${n}"/></svg>`;
  return `<div class="ctab ${i < 17 ? 'wide' : ''} d-flex align-items-center justify-content-center">${body}</div>`;
}).join('');
/* track every label so that it fills its nominal width */
document.querySelectorAll('[data-w],[data-h]').forEach(el => {
  el.style.display = 'inline-block';
  el.style.whiteSpace = 'nowrap';
  const r = el.getBoundingClientRect(), want = +(el.dataset.w || el.dataset.h);
  const now = el.dataset.w ? r.width : r.height;
  el.style.letterSpacing = ((want - now) / el.textContent.length) + 'px';
});
</script>
<script src="https://cdn.jsdelivr.net/npm/bootstrap@5.3.0/dist/js/bootstrap.bundle.min.js"></script>
</body>
</html>
